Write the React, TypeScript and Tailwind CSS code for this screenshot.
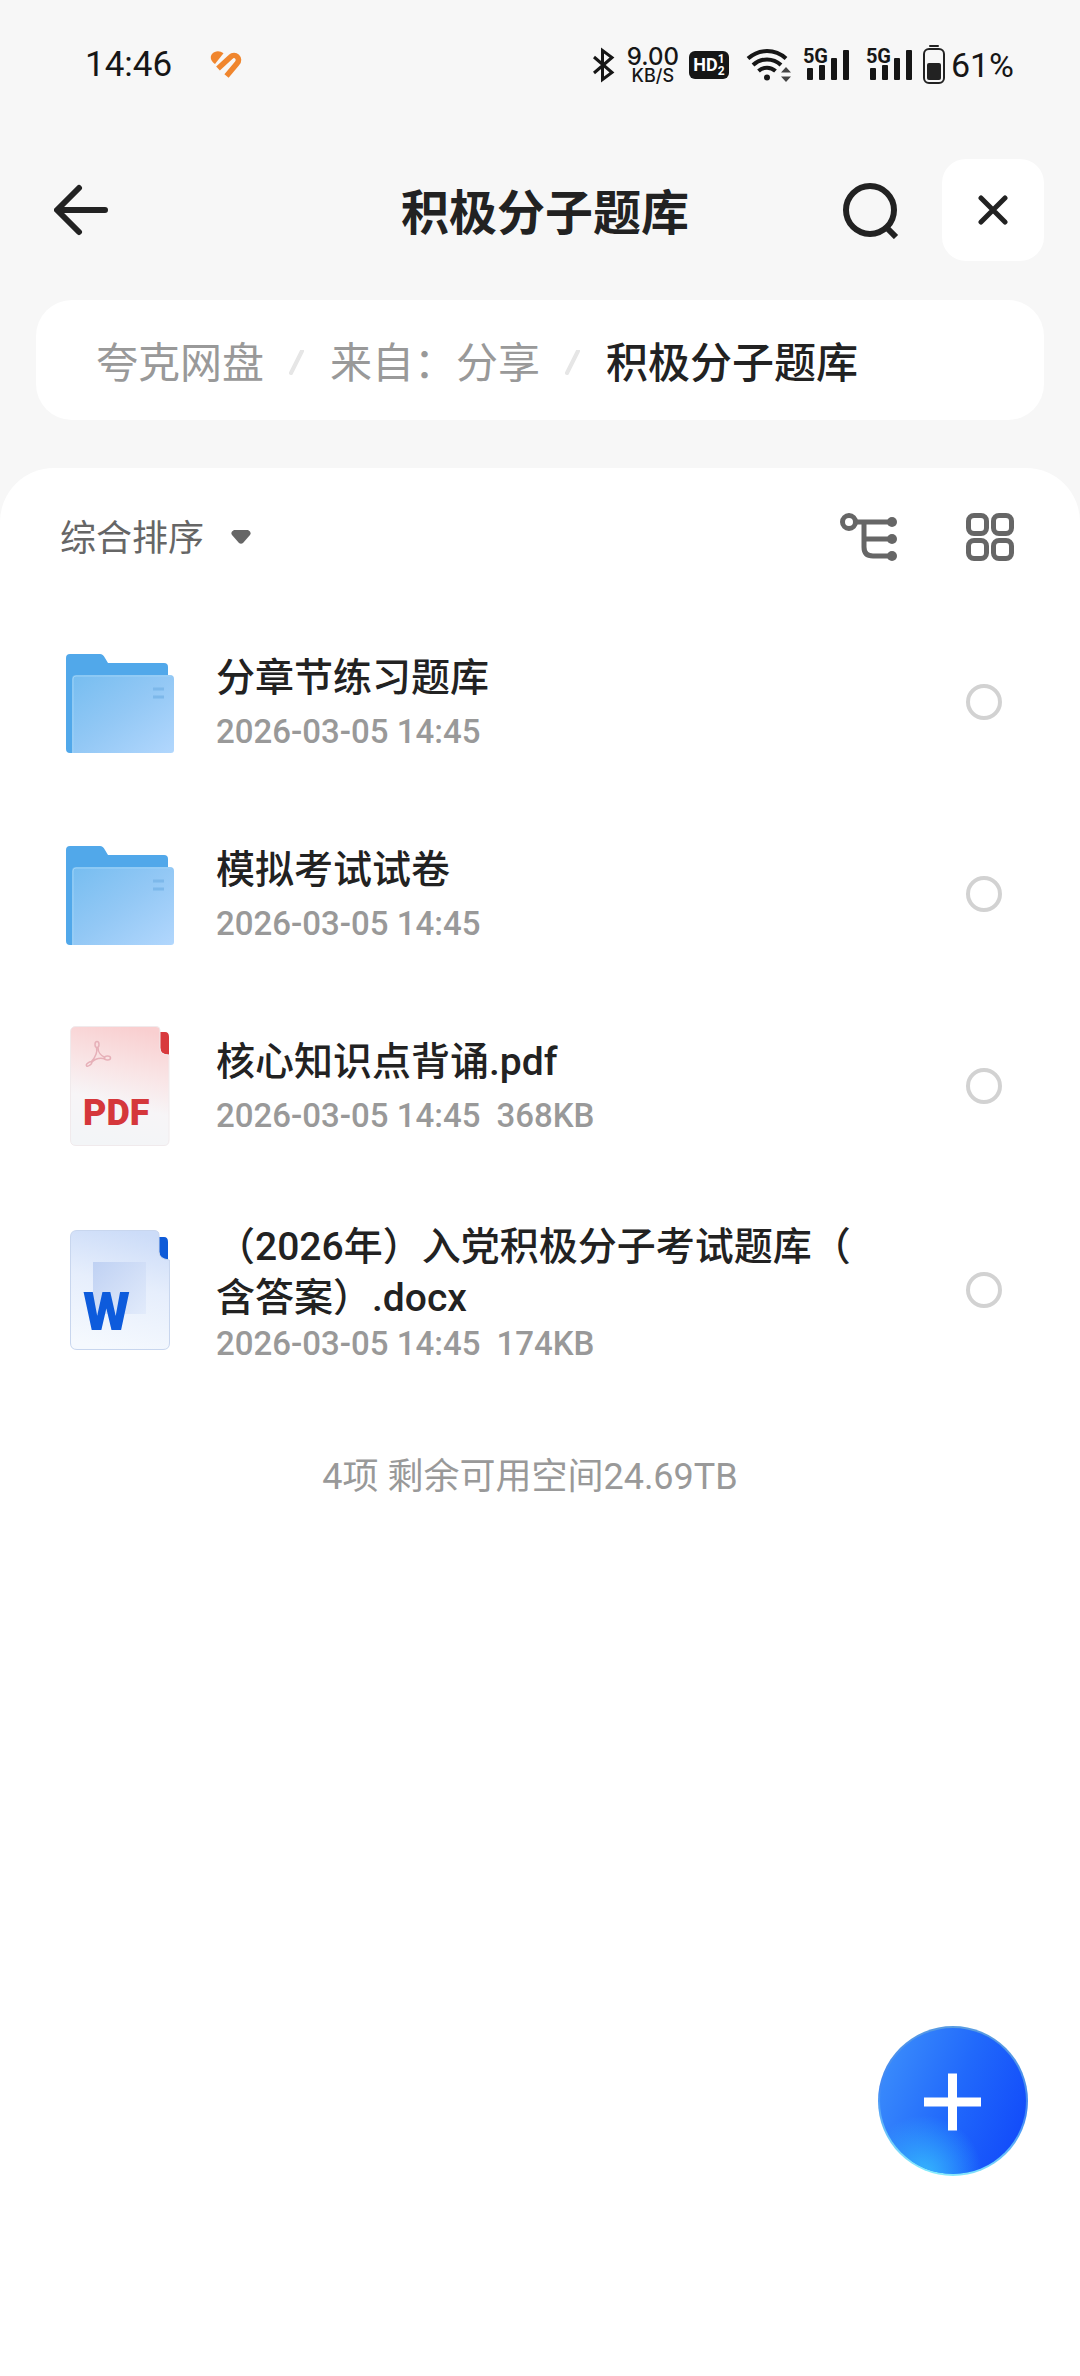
import React, { useState } from "react";

type FileKind = "folder" | "pdf" | "word";

interface FileItem {
   name: string;
   time: string;
   size?: string;
   kind: FileKind;
   long?: boolean;
}

const files: FileItem[] = [
   { name: "分章节练习题库", time: "2026-03-05 14:45", kind: "folder" },
   { name: "模拟考试试卷", time: "2026-03-05 14:45", kind: "folder" },
   { name: "核心知识点背诵.pdf", time: "2026-03-05 14:45", size: "368KB", kind: "pdf" },
   { name: "（2026年）入党积极分子考试题库（含答案）.docx", time: "2026-03-05 14:45", size: "174KB", kind: "word", long: true },
];

const Signal = () => (
   <div className="relative h-9 w-12">
      <span className="absolute left-0 top-0 font-['Roboto'] text-[20px] leading-[18px] font-bold">5G</span>
      <svg className="h-9 w-12" viewBox="0 0 48 36" fill="#161616" aria-hidden="true">
         <rect x="4" y="21" width="6" height="12" rx="1" />
         <rect x="16" y="18" width="6" height="15" rx="1" />
         <rect x="28" y="11" width="6" height="22" rx="1" />
         <rect x="40" y="3" width="6" height="30" rx="1" />
      </svg>
   </div>
);

const StatusBar = () => (
   <div className="flex h-[130px] items-center justify-between pr-[66px] pl-[85px] text-[#161616]">
      <div className="flex items-center gap-9">
         <span className="text-[35px] leading-[40px]">14:46</span>
         <svg className="h-8 w-9" viewBox="0 0 36 32" fill="none" aria-hidden="true">
            <path d="M7 15C3 12.500 1.500 8 4 5 7 1.500 12 1.500 15.500 4.300Z" fill="#f0862e" />
            <path d="M10 19.500 22.500 8C27 3.500 33.500 9.500 29 14.500L18.500 27" stroke="#f0862e" strokeWidth="5.500" strokeLinejoin="round" />
         </svg>
      </div>
      <div className="flex items-center">
         <svg className="h-9 w-[22px]" viewBox="0 0 22 36" fill="none" stroke="#161616" strokeWidth="3" aria-hidden="true">
            <path d="M1 10 19 25.500 9.500 32.500V3.500L19 10.500 1 26" />
         </svg>
         <div className="ml-3 flex flex-col items-center font-['Inter'] font-medium">
            <span className="text-[24px] leading-[21px]">9.00</span>
            <span className="text-[18px] leading-[18px]">KB/S</span>
         </div>
         <div className="ml-[10px] flex h-7 w-10 items-center justify-center rounded-[6px] bg-[#161616] font-['Roboto'] text-white">
            <span className="text-[18px] leading-[20px] font-bold">HD</span>
            <span className="flex flex-col text-[12px] leading-[12px] font-bold">
               <span>1</span>
               <span>2</span>
            </span>
         </div>
         <svg className="ml-[17px] h-9 w-[46px]" viewBox="0 0 46 36" fill="none" stroke="#161616" strokeWidth="4" aria-hidden="true">
            <path d="M2 11.500C13 1.500 29 1.500 40 11.500" />
            <path d="M7 18C15 10.500 27 10.500 35 18" />
            <path d="M12.500 24C17.500 19.500 24.500 19.500 29.500 24" />
            <circle cx="21" cy="30.500" r="3" fill="#161616" stroke="none" />
            <path d="M40 20 45 25.500H35ZM40 35 45 29.500H35Z" fill="#444" stroke="none" />
         </svg>
         <div className="ml-[11px] flex gap-[15px]">
            <Signal />
            <Signal />
         </div>
         <svg className="ml-[9px] h-10 w-[22px]" viewBox="0 0 22 40" aria-hidden="true">
            <rect x="6" y="0" width="10" height="2" rx="1" fill="#222" />
            <rect x="1" y="4" width="20" height="34" rx="5" fill="none" stroke="#222" strokeWidth="2" />
            <rect x="4" y="18" width="14" height="17" rx="2" fill="#222" />
         </svg>
         <span className="ml-[6px] text-[34px] leading-[40px]">61%</span>
      </div>
   </div>
);

const FolderIcon = () => (
   <svg className="h-[100px] w-[108px]" viewBox="0 0 108 100" aria-hidden="true">
      <defs>
         <linearGradient id="folderFront" x1="0" y1="0" x2="1" y2="1">
            <stop offset="0" stopColor="#76bdf0" />
            <stop offset="0.5" stopColor="#93c8f5" />
            <stop offset="1" stopColor="#b2d7fd" />
         </linearGradient>
      </defs>
      <path d="M0 4Q0 0 4 0H34Q37 0 39 4L42 9H98Q102 9 102 13V60H20V99H4Q0 99 0 95Z" fill="#51a8ea" />
      <path d="M6 25Q6 21 10 21H104Q108 21 108 25V96Q108 99 105 99H6Z" fill="url(#folderFront)" />
      <path d="M7 99V25Q7 22 10 22H105" fill="none" stroke="#9cd2f7" strokeWidth="1" />
      <path d="M87 35H98M87 43H98" stroke="#7db8ea" strokeWidth="3" />
   </svg>
);

const PdfIcon = () => (
   <svg className="h-[120px] w-[100px]" viewBox="0 0 100 120" aria-hidden="true">
      <defs>
         <linearGradient id="pdfBody" x1="0.600" y1="0" x2="0.400" y2="1">
            <stop offset="0" stopColor="#f9cfd0" />
            <stop offset="0.350" stopColor="#f9e4e5" />
            <stop offset="0.650" stopColor="#f7f5f7" />
            <stop offset="1" stopColor="#f3f5f7" />
         </linearGradient>
      </defs>
      <path d="M88 6H95Q99 6 99 11V29Q90 29 90 22Z" fill="#d8393d" />
      <path d="M0.500 6Q0.500 0.500 6 0.500H86Q90 0.500 90 4V22Q90 29 99 29V114Q99 119.500 94 119.500H6Q0.500 119.500 0.500 114Z" fill="url(#pdfBody)" stroke="#f0eaec" strokeWidth="1" />
      <g fill="none" stroke="#e6b0b8" strokeWidth="1.500">
         <ellipse cx="27" cy="18.500" rx="2" ry="3" />
         <ellipse cx="37.500" cy="32" rx="3" ry="2" />
         <ellipse cx="19" cy="38" rx="3" ry="1.500" transform="rotate(-35 19 38)" />
         <path d="M26.500 21.500C27.500 25 26 31 21 36M28 21.500C28 26 31 30 35 31.500M21.500 36.500C25 33 30 31.500 35 33" />
      </g>
      <text x="13" y="99" fontSize="36" fontWeight="900" fill="#d5373b" fontFamily="Roboto, sans-serif">PDF</text>
   </svg>
);

const WordIcon = () => (
   <svg className="h-[120px] w-[100px]" viewBox="0 0 100 120" aria-hidden="true">
      <defs>
         <linearGradient id="wordBody" x1="0.600" y1="0" x2="0.400" y2="1">
            <stop offset="0" stopColor="#ccdcf8" />
            <stop offset="0.450" stopColor="#e6eefc" />
            <stop offset="1" stopColor="#f5f9fe" />
         </linearGradient>
         <linearGradient id="wordSquare" x1="0" y1="0" x2="1" y2="1">
            <stop offset="0" stopColor="#bfd1f3" />
            <stop offset="1" stopColor="#e2ebfb" />
         </linearGradient>
      </defs>
      <path d="M88 7H94Q98 7 98 12V30Q89 29 89 22Z" fill="#0f5bd8" />
      <path d="M0.500 7Q0.500 0.500 7 0.500H84Q89 0.500 89 5V22Q89 29 99.500 30V113Q99.500 119.500 93 119.500H7Q0.500 119.500 0.500 113Z" fill="url(#wordBody)" stroke="#c8d6ee" strokeWidth="1" />
      <rect x="23" y="32" width="53" height="52" fill="url(#wordSquare)" />
      <text x="13" y="100" fontSize="54" fontWeight="900" fill="#0d5bdc" fontFamily="Roboto, sans-serif">W</text>
   </svg>
);

const icons = {
   folder: <FolderIcon />,
   pdf: <PdfIcon />,
   word: <WordIcon />,
};

const Slash = () => (
   <svg className="h-7 w-[66px]" viewBox="0 0 66 28" aria-hidden="true">
      <path d="M27 23 38 1" stroke="#e6e6e6" strokeWidth="4" strokeLinecap="round" />
   </svg>
);

const App = () => {
   const [selected, setSelected] = useState<string[]>([]);

   const toggle = (name: string) => {
      setSelected(selected.includes(name) ? selected.filter((n) => n !== name) : [...selected, name]);
   };

   return (
      <div className="flex min-h-screen flex-col bg-[#f7f7f7] font-['Roboto','Noto_Sans_CJK_SC',sans-serif] text-[#222]">
         <StatusBar />

         <header className="flex h-[170px] items-center px-9 pb-[10px]">
            <div className="flex flex-1 pl-[18px]">
               <button type="button" aria-label="返回">
                  <svg className="h-[54px] w-[54px]" viewBox="0 0 54 54" fill="none" stroke="#222" strokeWidth="6" strokeLinecap="round" strokeLinejoin="round" aria-hidden="true">
                     <path d="M51 27H4M25 5 3 27 25 49" />
                  </svg>
               </button>
            </div>
            <h1 className="pt-2 pr-2 text-[48px] leading-[60px] font-bold">积极分子题库</h1>
            <div className="flex flex-1 items-center justify-end gap-[42px]">
               <button type="button" aria-label="搜索">
                  <svg className="h-[58px] w-[58px]" viewBox="0 0 58 58" fill="none" stroke="#222" strokeWidth="6" aria-hidden="true">
                     <circle cx="28" cy="29" r="24" />
                     <path d="M44 46 54 56" />
                  </svg>
               </button>
               <button type="button" aria-label="关闭" className="flex h-[102px] w-[102px] items-center justify-center rounded-[24px] bg-white">
                  <svg className="h-[30px] w-[30px]" viewBox="0 0 30 30" stroke="#222" strokeWidth="5" strokeLinecap="round" aria-hidden="true">
                     <path d="M3 3 27 27M27 3 3 27" />
                  </svg>
               </button>
            </div>
         </header>

         <nav className="mx-9 flex h-[120px] items-center rounded-[36px] bg-white px-[60px] pt-2 text-[42px] leading-[48px] text-[#999]">
            <a href="#">夸克网盘</a>
            <Slash />
            <a href="#">来自：分享</a>
            <Slash />
            <a href="#" className="font-medium text-[#222]">积极分子题库</a>
         </nav>

         <main className="mt-12 flex-1 rounded-t-[54px] bg-white">
            <div className="flex h-[138px] items-center justify-between pr-[66px] pl-[60px] text-[#666]">
               <label className="flex items-center gap-[26px]">
                  <select aria-label="排序" className="appearance-none pt-1 text-[36px] leading-[42px]">
                     <option>综合排序</option>
                  </select>
                  <svg className="h-[14px] w-5" viewBox="0 0 20 14" fill="#666" aria-hidden="true">
                     <path d="M3 0H17Q21 2 19 5L12 13Q10 14.500 8 13L1 5Q-1 2 3 0Z" />
                  </svg>
               </label>
               <div className="flex items-center gap-[68px]">
                  <button type="button" aria-label="目录树">
                     <svg className="h-12 w-[58px]" viewBox="0 0 58 48" fill="none" stroke="#666" strokeWidth="5" aria-hidden="true">
                        <circle cx="9" cy="9" r="6.500" />
                        <path d="M16 9H52M24 9V34Q24 43 33 43H52M24 26H52" />
                        <g fill="#666" stroke="none">
                           <circle cx="52" cy="9" r="5" />
                           <circle cx="52" cy="26" r="5" />
                           <circle cx="52" cy="43" r="5" />
                        </g>
                     </svg>
                  </button>
                  <button type="button" aria-label="宫格">
                     <svg className="h-12 w-12" viewBox="0 0 48 48" fill="none" stroke="#666" strokeWidth="5" aria-hidden="true">
                        <rect x="2.500" y="2.500" width="18" height="18" rx="5.500" />
                        <rect x="27.500" y="2.500" width="18" height="18" rx="5.500" />
                        <rect x="2.500" y="27.500" width="18" height="18" rx="5.500" />
                        <rect x="27.500" y="27.500" width="18" height="18" rx="5.500" />
                     </svg>
                  </button>
               </div>
            </div>

            <ul>
               {files.map((file: FileItem) => (
                  <li key={file.name} className={file.long ? "h-[216px]" : "h-[192px]"}>
                     <label className="flex h-full items-center pr-[78px] pl-[60px]">
                        <div className="flex w-[156px] shrink-0 pl-[6px]">
                           <div className={file.kind === "folder" ? "pt-1" : "pl-1"}>{icons[file.kind]}</div>
                        </div>
                        <div className={`mr-[90px] flex-1 ${file.long ? "pt-1" : ""}`}>
                           <p className="text-[39px] leading-[51px] font-medium [line-break:anywhere]">{file.name}</p>
                           <p className={`flex gap-4 text-[33px] leading-[39px] font-medium text-[#999] ${file.long ? "" : "mt-2"}`}>
                              <span>{file.time}</span>
                              {file.size && <span>{file.size}</span>}
                           </p>
                        </div>
                        <input
                           type="checkbox"
                           className="h-9 w-9 shrink-0 appearance-none rounded-full border-4 border-[#d2d2d2] checked:border-[#1f62ff] checked:bg-[#1f62ff]"
                           checked={selected.includes(file.name)}
                           onChange={() => toggle(file.name)}
                        />
                     </label>
                  </li>
               ))}
            </ul>

            <p className="mt-[58px] pr-5 text-center text-[36px] leading-[42px] text-[#999]">4项 剩余可用空间24.69TB</p>
         </main>

         <button type="button" aria-label="新建" className="fixed right-[52px] bottom-[200px]">
            <svg className="h-[150px] w-[150px]" viewBox="0 0 150 150" aria-hidden="true">
               <defs>
                  <linearGradient id="fabFill" x1="0" y1="0.300" x2="1" y2="0.700">
                     <stop offset="0" stopColor="#3a8bfb" />
                     <stop offset="0.500" stopColor="#2169fb" />
                     <stop offset="1" stopColor="#124bfa" />
                  </linearGradient>
                  <radialGradient id="fabGlow" cx="0.300" cy="1" r="0.400">
                     <stop offset="0" stopColor="#35b6fd" />
                     <stop offset="1" stopColor="#35b6fd" stopOpacity="0" />
                  </radialGradient>
                  <linearGradient id="fabRim" x1="0.600" y1="0" x2="0.400" y2="1">
                     <stop offset="0" stopColor="#5a9de0" />
                     <stop offset="0.500" stopColor="#3f86f5" />
                     <stop offset="1" stopColor="#8aeefc" />
                  </linearGradient>
               </defs>
               <circle cx="75" cy="75" r="75" fill="url(#fabRim)" />
               <circle cx="75" cy="75" r="73" fill="url(#fabFill)" />
               <circle cx="75" cy="75" r="73" fill="url(#fabGlow)" />
               <path d="M46 76H103M74.500 47.500V104.500" stroke="#fff" strokeWidth="9" />
            </svg>
         </button>
      </div>
   );
};

export default App;
